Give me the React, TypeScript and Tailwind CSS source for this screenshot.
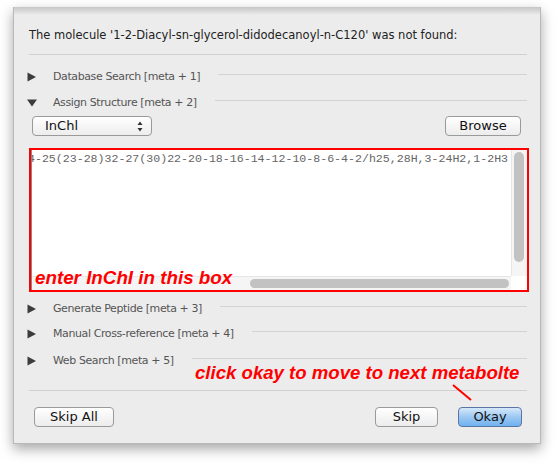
import React from 'react';

const uiFont = { fontFamily: '"DejaVu Sans", "Liberation Sans", sans-serif' };
const redFont = { fontFamily: '"Liberation Sans", Arial, sans-serif' };

function Arrow({ open }: { open?: boolean }) {
  return open ? (
    <svg width="10" height="8" viewBox="0 0 10 8" className="shrink-0">
      <path d="M0 0.5 L10 0.5 L5 7.5 Z" fill="#3c3c3c" />
    </svg>
  ) : (
    <svg width="10" height="10" viewBox="0 0 10 10" className="shrink-0">
      <path d="M0.5 0.5 L9 5 L0.5 9.5 Z" fill="#3c3c3c" />
    </svg>
  );
}

function Section({ label, open }: { label: string; open?: boolean }) {
  return (
    <div className="flex items-center h-4">
      <div className="w-[26px] -ml-[2px]">
        <Arrow open={open} />
      </div>
      <span className="text-[11px] tracking-[-0.4px] text-[#555] whitespace-nowrap">{label}</span>
      <div className="flex-1 h-px bg-[#d3d3d3] ml-[18px] mb-[6px]" />
    </div>
  );
}

function Btn({ children, className = '', primary }: { children: React.ReactNode; className?: string; primary?: boolean }) {
  return (
    <div
      className={
        'h-5 rounded-[4px] border flex items-center justify-center text-[13px] text-[#111] ' +
        (primary
          ? 'border-[#5b76a6] bg-gradient-to-b from-[#d6e8fa] via-[#9cc8f2] to-[#6fb2f0] '
          : 'border-[#9a9a9a] bg-gradient-to-b from-white to-[#ececec] ') +
        className
      }
    >
      {children}
    </div>
  );
}

export default function App() {
  return (
    <div className="w-[556px] h-[464px] bg-white relative" style={uiFont}>
      <div className="absolute left-[13px] top-[7px] w-[528px] h-[437px] bg-[#ececec] border-x border-b border-[#b9b9b9] shadow-[0_5px_12px_rgba(0,0,0,0.35)] flex flex-col">
        <div className="h-[8px] bg-gradient-to-b from-[#c6c6c6] to-[#ececec]" />
        <div className="flex flex-col pl-[15px] pr-[13px]">
          <div className="mt-[12px] h-4 leading-4 text-[11.5px] text-[#222] whitespace-nowrap">
            The molecule '1-2-Diacyl-sn-glycerol-didodecanoyl-n-C120' was not found:
          </div>
          <div className="mt-[11px] h-px bg-[#d0d0d0]" />
          <div className="mt-[14px]">
            <Section label="Database Search [meta + 1]" />
          </div>
          <div className="mt-[10px]">
            <Section label="Assign Structure [meta + 2]" open />
          </div>
          <div className="mt-[5px] flex justify-between items-center">
            <div className="ml-[3px] w-[120px] h-5 rounded-[4px] border border-[#9a9a9a] bg-gradient-to-b from-white to-[#ededed] flex items-center pl-3 pr-2">
              <span className="flex-1 text-[13px] text-[#111]">InChl</span>
              <svg width="6" height="11" viewBox="0 0 6 11">
                <path d="M0.5 4 L3 0.5 L5.5 4 Z" fill="#333" />
                <path d="M0.5 7 L3 10.5 L5.5 7 Z" fill="#333" />
              </svg>
            </div>
            <Btn className="w-[76px] mr-[6px]">Browse</Btn>
          </div>
          <div className="mt-[12px] -mr-[2px] h-[144px] border-2 border-[#ff0000] bg-white flex relative">
            <div className="w-px bg-[#8a8a8a]" />
            <div className="flex-1 flex flex-col">
              <div className="flex-1 flex">
                <div className="flex-1 overflow-hidden">
                  <div
                    className="whitespace-nowrap text-[11.6px] text-[#666] leading-4 mt-[1px] -ml-[4px]"
                    style={{ fontFamily: '"Liberation Mono", monospace' }}
                  >
                    4-25(23-28)32-27(30)22-20-18-16-14-12-10-8-6-4-2/h25,28H,3-24H2,1-2H3
                  </div>
                </div>
                <div className="w-[16px] bg-[#f5f5f5] border-l border-[#e6e6e6] pt-[2px] pl-[2px]">
                  <div className="w-[10px] h-[110px] rounded-full bg-[#c2c2c2]" />
                </div>
              </div>
              <div className="h-[14px] flex">
                <div className="flex-1 bg-[#f5f5f5] border-t border-[#e6e6e6] flex items-center pl-[218px] pr-[2px]">
                  <div className="flex-1 h-[9px] rounded-full bg-[#c2c2c2]" />
                </div>
                <div className="w-[16px] bg-white" />
              </div>
            </div>
            <div
              className="absolute left-[4px] bottom-[2px] text-[18.8px] font-bold italic text-[#ff0000] leading-5 whitespace-nowrap"
              style={redFont}
            >
              enter InChI in this box
            </div>
          </div>
          <div className="mt-[9px]">
            <Section label="Generate Peptide [meta + 3]" />
          </div>
          <div className="mt-[9px]">
            <Section label="Manual Cross-reference [meta + 4]" />
          </div>
          <div className="mt-[11px]">
            <Section label="Web Search [meta + 5]" />
          </div>
          <div className="mt-[21px] h-px bg-[#d0d0d0]" />
          <div className="mt-[16px] flex items-center">
            <Btn className="w-[80px] ml-[5px]">Skip All</Btn>
            <div className="flex-1" />
            <Btn className="w-[63px]">Skip</Btn>
            <Btn primary className="w-[64px] ml-[20px] mr-[5px]">Okay</Btn>
          </div>
        </div>
      </div>
      <div
        className="absolute left-[195px] top-[363px] text-[18.6px] font-bold italic text-[#ff0000] leading-5 whitespace-nowrap"
        style={redFont}
      >
        click okay to move to next metabolte
      </div>
      <svg className="absolute left-0 top-0" width="556" height="464" style={{ pointerEvents: 'none' }}>
        <line x1="453" y1="385" x2="471" y2="400" stroke="#ff0000" strokeWidth="2" />
      </svg>
    </div>
  );
}
